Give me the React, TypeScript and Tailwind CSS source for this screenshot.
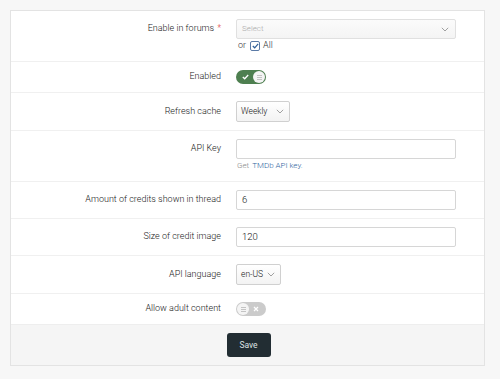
import React from "react";

function Chevron({ className = "" }: { className?: string }) {
  return (
    <svg width="8" height="5" viewBox="0 0 8 5" className={className}>
      <path d="M0.8 0.8 L4 4 L7.2 0.8" fill="none" stroke="#a0a0a0" strokeWidth="1" />
    </svg>
  );
}

function Row({
  label,
  required,
  h,
  first,
  children,
}: {
  label: string;
  required?: boolean;
  h: string;
  first?: boolean;
  children: React.ReactNode;
}) {
  return (
    <div className={`flex py-[8px] ${first ? "" : "border-t border-[#f0f0f0]"}`}>
      <div className={`w-[210px] ${h} flex items-center justify-end text-[9px] font-light text-[#1a1a1a]`}>
        {label}
        {required && <span className="ml-[3px] text-[#d33]">*</span>}
      </div>
      <div className="ml-[15px] w-[220px]">{children}</div>
    </div>
  );
}

function Lines() {
  return (
    <>
      <div className="h-[1px] w-[5px] bg-[#c4c4c4]" />
      <div className="h-[1px] w-[5px] bg-[#c4c4c4]" />
      <div className="h-[1px] w-[5px] bg-[#c4c4c4]" />
    </>
  );
}

function ToggleOn() {
  return (
    <div className="relative h-[14px] w-[30px] rounded-full bg-[#4e7f50]">
      <svg width="7" height="6" viewBox="0 0 7 6" className="absolute left-[6px] top-[4px]">
        <path d="M0.8 3 L2.7 4.8 L6.2 1" fill="none" stroke="#fff" strokeWidth="1.3" />
      </svg>
      <div className="absolute right-[1px] top-[1px] flex h-[12px] w-[12px] flex-col items-center justify-center gap-[1px] rounded-full bg-[#f4f4f4]">
        <Lines />
      </div>
    </div>
  );
}

function ToggleOff() {
  return (
    <div className="relative h-[14px] w-[30px] rounded-full bg-[#cbcbcb]">
      <div className="absolute left-[1px] top-[1px] flex h-[12px] w-[12px] flex-col items-center justify-center gap-[1px] rounded-full bg-[#f4f4f4]">
        <Lines />
      </div>
      <svg width="6" height="6" viewBox="0 0 6 6" className="absolute right-[7px] top-[4px]">
        <path d="M1 1 L5 5 M5 1 L1 5" fill="none" stroke="#fff" strokeWidth="1.3" />
      </svg>
    </div>
  );
}

function SmallSelect({ value, w }: { value: string; w: string }) {
  return (
    <div
      className={`${w} flex h-[21px] items-center justify-between rounded-[2px] border border-[#d0d0d0] bg-gradient-to-b from-white to-[#f3f3f3] pl-[4px] pr-[5px] text-[8.5px] font-light text-[#111]`}
    >
      <span>{value}</span>
      <Chevron />
    </div>
  );
}

function TextInput({ value }: { value?: string }) {
  return (
    <div className="flex h-[20px] w-[220px] items-center rounded-[2px] border border-[#d6d6d6] bg-white pl-[5px] text-[9.5px] font-light text-[#111]">
      {value}
    </div>
  );
}

export default function App() {
  return (
    <div
      className="min-h-[379px] w-[500px] bg-[#f7f7f7] pl-[10px] pt-[10px]"
      style={{ fontFamily: "Roboto, 'Noto Sans', sans-serif" }}
    >
      <div className="w-[475px] border border-[#e3e3e3] bg-white">
        <Row label="Enable in forums" required h="h-[20px]" first>
          <div className="flex h-[20px] w-[220px] items-center justify-between rounded-[2px] border border-[#e0e0e0] bg-gradient-to-b from-[#fbfbfb] to-[#f4f4f4] pl-[5px] pr-[6px] text-[8px] font-light text-[#aaa]">
            <span>Select</span>
            <Chevron />
          </div>
          <div className="flex h-[14px] items-center text-[9px] font-light text-[#333]">
            <span className="ml-[2px]">or</span>
            <div className="ml-[4px] flex h-[10px] w-[10px] items-center justify-center rounded-[2px] border border-[#5a7aa6] bg-white">
              <svg width="7" height="6" viewBox="0 0 7 6">
                <path d="M0.8 3 L2.7 4.8 L6.2 0.8" fill="none" stroke="#2f5f98" strokeWidth="1.2" />
              </svg>
            </div>
            <span className="ml-[3px]">All</span>
          </div>
        </Row>
        <Row label="Enabled" h="h-[14px]">
          <ToggleOn />
        </Row>
        <Row label="Refresh cache" h="h-[21px]">
          <SmallSelect value="Weekly" w="w-[54px]" />
        </Row>
        <Row label="API Key" h="h-[20px]">
          <TextInput />
          <div className="flex h-[14px] items-center text-[8px] font-light text-[#888]">
            <span className="ml-[1px]">Get</span>
            <span className="ml-[3px] text-[#2f65a0]">TMDb API key.</span>
          </div>
        </Row>
        <Row label="Amount of credits shown in thread" h="h-[20px]">
          <TextInput value="6" />
        </Row>
        <Row label="Size of credit image" h="h-[20px]">
          <TextInput value="120" />
        </Row>
        <Row label="API language" h="h-[21px]">
          <SmallSelect value="en-US" w="w-[45px]" />
        </Row>
        <Row label="Allow adult content" h="h-[14px]">
          <ToggleOff />
        </Row>
        <div className="flex justify-center border-t border-[#eeeeee] bg-[#f5f5f5] py-[8px]">
          <div className="ml-[2px] flex h-[24px] w-[44px] items-center justify-center rounded-[3px] bg-[#222d33] text-[8.5px] text-[#dde2e4]">
            Save
          </div>
        </div>
      </div>
    </div>
  );
}
